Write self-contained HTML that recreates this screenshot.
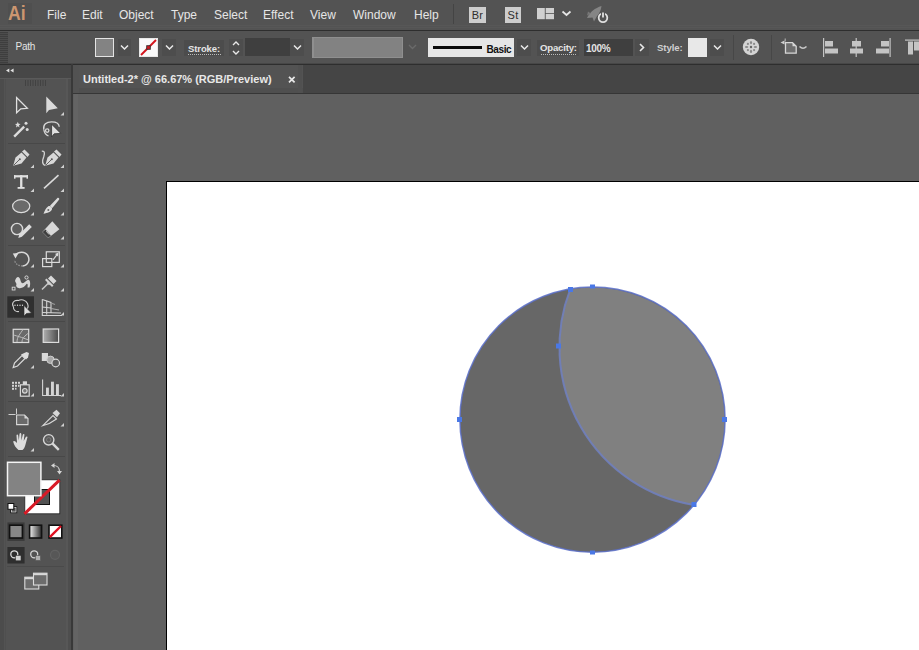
<!DOCTYPE html>
<html><head><meta charset="utf-8">
<style>
*{margin:0;padding:0;box-sizing:border-box}
html,body{width:919px;height:650px;overflow:hidden;background:#535353;font-family:"Liberation Sans",sans-serif}
.a{position:absolute}
#menubar{left:0;top:0;width:919px;height:30px;background:#535353}
#menuline{left:0;top:30px;width:919px;height:1px;background:#2e2e2e}
.mi{position:absolute;top:8px;font-size:12px;color:#e6e6e6;line-height:14px;white-space:nowrap}
#ctrl{left:0;top:31px;width:919px;height:33px;background:#535353}
#ctrlline{left:0;top:63px;width:919px;height:1px;background:#474747}
.lbl{position:absolute;font-size:10px;color:#e4e4e4;line-height:12px;white-space:nowrap}
#tools{left:0;top:64px;width:72px;height:586px;background:#535353}
#tabbar{left:73px;top:64px;width:846px;height:30px;background:#454545}
#canvas{left:73px;top:94px;width:846px;height:556px;background:#606060}
#artboard{left:166px;top:181px;width:760px;height:480px;background:#fff;border:1px solid #000}
</style></head>
<body>
<div class="a" id="menubar">
  <div class="a" style="left:8px;top:3px;width:24px;height:21px;background:#4f4f4f"></div>
  <div class="a" style="left:8px;top:1px;font-size:20.5px;color:#cc9670;font-weight:bold;line-height:24px;letter-spacing:0px;transform:scaleX(0.86);transform-origin:0 0">Ai</div>
  <div class="mi" style="left:47px">File</div>
  <div class="mi" style="left:82px">Edit</div>
  <div class="mi" style="left:119px">Object</div>
  <div class="mi" style="left:171px">Type</div>
  <div class="mi" style="left:214px">Select</div>
  <div class="mi" style="left:263px">Effect</div>
  <div class="mi" style="left:310px">View</div>
  <div class="mi" style="left:353px">Window</div>
  <div class="mi" style="left:414px">Help</div>
  <div class="a" style="left:453px;top:4px;width:1px;height:20px;background:#444"></div>
  <div class="a" style="left:469px;top:7px;width:17px;height:16px;background:#cdcdcd;color:#2e2e2e;font-size:11px;line-height:16px;text-align:center;letter-spacing:0.3px">Br</div>
  <div class="a" style="left:505px;top:7px;width:16px;height:16px;background:#cdcdcd;color:#2e2e2e;font-size:11px;line-height:16px;text-align:center;letter-spacing:0.3px">St</div>
  <svg class="a" style="left:536px;top:7px" width="20" height="13"><rect x="1" y="1" width="7.8" height="11.2" fill="#d0d0d0"/><rect x="9.7" y="1" width="8.3" height="5.2" fill="#d0d0d0"/><rect x="9.7" y="7" width="8.3" height="5.2" fill="#d0d0d0"/></svg>
  <svg class="a" style="left:561px;top:10px" width="11" height="7"><path d="M1.5 1.5 L5.5 5 L9.5 1.5" fill="none" stroke="#e6e6e6" stroke-width="1.7"/></svg>
  <svg class="a" style="left:583px;top:3px" width="28" height="22"><path d="M4 15 C7 9 12 5 18.5 3 C18 7 16.5 10.5 14 13 L11 18.5 L9.5 14.5 Z" fill="#858585"/><path d="M8 10.5 L4 12.5 L5 8.5 Z" fill="#777"/><circle cx="20" cy="14.8" r="4.3" fill="#535353" stroke="#e0e0e0" stroke-width="1.8"/><rect x="18" y="8.5" width="4" height="4.5" fill="#535353"/><path d="M20 9.5 L20 14.5" stroke="#e0e0e0" stroke-width="1.8"/></svg>
</div>
<div class="a" style="left:0;top:25px;width:919px;height:1px;background:#575757"></div>
<div class="a" style="left:0;top:27px;width:919px;height:1px;background:#575757"></div>
<div class="a" id="menuline"></div>
<div class="a" id="ctrl">
  <div class="a" style="left:0;top:1px;width:8px;height:31px;background:repeating-linear-gradient(#3e3e3e 0 1px,#4c4c4c 1px 2px)"></div>
  <div class="lbl" style="left:15.5px;top:10px;font-size:10px;letter-spacing:-0.25px">Path</div>
  <!-- fill swatch -->
  <div class="a" style="left:95px;top:7px;width:19px;height:19px;border:1.6px solid #e4e4e4;background:#838383"></div>
  <div class="a" style="left:118px;top:8px;width:13px;height:17px;background:#4d4d4d"></div>
  <svg class="a" style="left:120px;top:13px" width="9" height="6"><path d="M1 1.5 L4.5 5 L8 1.5" fill="none" stroke="#e8e8e8" stroke-width="1.5"/></svg>
  <!-- stroke swatch -->
  <div class="a" style="left:139px;top:7px;width:19px;height:19px;background:#fafafa;border:1px solid #e8e8e8"></div>
  <svg class="a" style="left:139px;top:7px" width="19" height="19"><path d="M2 17 L17 2" stroke="#d4161e" stroke-width="2"/><rect x="7.7" y="7.7" width="3.6" height="3.6" fill="#d4161e" stroke="#333" stroke-width="0.9"/></svg>
  <div class="a" style="left:162px;top:8px;width:14px;height:17px;background:#4d4d4d"></div>
  <svg class="a" style="left:165px;top:13px" width="9" height="6"><path d="M1 1.5 L4.5 5 L8 1.5" fill="none" stroke="#e8e8e8" stroke-width="1.5"/></svg>
  <!-- stroke label -->
  <div class="a" style="left:184px;top:9px;width:40px;height:16px;background:#4c4c4c"></div>
  <div class="lbl" style="left:188px;top:12px;font-size:9.5px;font-weight:bold;letter-spacing:-0.1px">Stroke:</div>
  <div class="a" style="left:188px;top:23px;width:33px;height:1px;background:repeating-linear-gradient(90deg,#bbb 0 1px,transparent 1px 2px)"></div>
  <div class="a" style="left:229px;top:8px;width:14px;height:17px;background:#4d4d4d"></div>
  <svg class="a" style="left:231px;top:9px" width="10" height="16"><path d="M2 5 L5 2 L8 5 M2 11 L5 14 L8 11" fill="none" stroke="#e8e8e8" stroke-width="1.4"/></svg>
  <div class="a" style="left:245px;top:7px;width:45px;height:18px;background:#3f3f3f"></div>
  <div class="a" style="left:290px;top:8px;width:14px;height:17px;background:#4d4d4d"></div>
  <svg class="a" style="left:293px;top:13px" width="9" height="6"><path d="M1 1.5 L4.5 5 L8 1.5" fill="none" stroke="#e8e8e8" stroke-width="1.5"/></svg>
  <!-- variable width field -->
  <div class="a" style="left:312px;top:6px;width:91px;height:21px;background:#828282;border:1px solid #8f8f8f;border-left-width:2px"></div>
  <svg class="a" style="left:408px;top:13px" width="9" height="6"><path d="M1 1 L4.5 4.5 L8 1" fill="none" stroke="#6a6a6a" stroke-width="1.4"/></svg>
  <!-- brush -->
  <div class="a" style="left:428px;top:7px;width:86px;height:19px;background:#e6e6e6"></div>
  <div class="a" style="left:433px;top:14.5px;width:49px;height:3.5px;background:#0a0a0a"></div>
  <div class="a" style="left:486.5px;top:12.5px;font-size:10px;line-height:12px;color:#111;font-weight:bold;letter-spacing:-0.4px">Basic</div>
  <div class="a" style="left:517px;top:8px;width:14px;height:17px;background:#4d4d4d"></div>
  <svg class="a" style="left:520px;top:13px" width="9" height="6"><path d="M1 1.5 L4.5 5 L8 1.5" fill="none" stroke="#e8e8e8" stroke-width="1.5"/></svg>
  <!-- opacity -->
  <div class="a" style="left:537px;top:9px;width:42px;height:16px;background:#4c4c4c"></div>
  <div class="lbl" style="left:540px;top:11px;font-size:9.6px;font-weight:bold;letter-spacing:-0.2px">Opacity:</div>
  <div class="a" style="left:541px;top:23px;width:35px;height:1px;background:repeating-linear-gradient(90deg,#bbb 0 1px,transparent 1px 2px)"></div>
  <div class="a" style="left:584px;top:8px;width:49px;height:17px;background:#3f3f3f"></div>
  <div class="lbl" style="left:586px;top:11.5px;font-size:10px;font-weight:bold;letter-spacing:-0.3px">100%</div>
  <div class="a" style="left:635px;top:8px;width:14px;height:17px;background:#4d4d4d"></div>
  <svg class="a" style="left:639px;top:12px" width="6" height="9"><path d="M1 1 L4.5 4.5 L1 8" fill="none" stroke="#e8e8e8" stroke-width="1.6"/></svg>
  <div class="lbl" style="left:657px;top:11px;font-size:9.6px;font-weight:bold;color:#d0d0d0;letter-spacing:-0.1px">Style:</div>
  <div class="a" style="left:688px;top:7px;width:19px;height:19px;background:#e8e8e8"></div>
  <div class="a" style="left:710px;top:8px;width:14px;height:17px;background:#4d4d4d"></div>
  <svg class="a" style="left:713px;top:13px" width="9" height="6"><path d="M1 1.5 L4.5 5 L8 1.5" fill="none" stroke="#e8e8e8" stroke-width="1.5"/></svg>
  <div class="a" style="left:733px;top:4px;width:1px;height:25px;background:#474747"></div>
  <!-- globe -->
  <svg class="a" style="left:742px;top:7px" width="18" height="18"><circle cx="9" cy="9" r="8.2" fill="#d4d4d4"/><g fill="#8a8a8a"><circle cx="9" cy="9" r="1.2" fill="#666"/><ellipse cx="9" cy="4.6" rx="1.1" ry="1.7"/><ellipse cx="9" cy="13.4" rx="1.1" ry="1.7"/><ellipse cx="4.6" cy="9" rx="1.7" ry="1.1"/><ellipse cx="13.4" cy="9" rx="1.7" ry="1.1"/><circle cx="5.9" cy="5.9" r="1.1"/><circle cx="12.1" cy="12.1" r="1.1"/><circle cx="12.1" cy="5.9" r="1.1"/><circle cx="5.9" cy="12.1" r="1.1"/></g></svg>
  <div class="a" style="left:771px;top:4px;width:1px;height:25px;background:#474747"></div>
  <!-- doc icon -->
  <svg class="a" style="left:778px;top:6px" width="30" height="20"><path d="M2.5 5.5 L6.5 3.5 L6.5 7.5 Z" fill="#cfcfcf"/><path d="M7.2 1.5 L7.2 4.5" stroke="#bbb" stroke-width="1"/><path d="M7.5 5.6 L14.5 5.6 L18.2 9.3 L18.2 16.2 L7.5 16.2 Z" fill="#6e6e6e" stroke="#d6d6d6" stroke-width="1.3"/><path d="M14.5 5.6 L18.2 9.3 L14.5 9.3 Z" fill="#d6d6d6"/><path d="M21.5 9.5 Q25 13 28.5 9.5" fill="none" stroke="#c8c8c8" stroke-width="1.5"/></svg>
  <!-- align icons -->
  <svg class="a" style="left:820px;top:6px" width="99" height="21">
    <g fill="#c4c4c4"><rect x="3" y="1" width="1.2" height="19"/><rect x="5" y="4" width="8" height="5.5"/><rect x="5" y="11.5" width="13" height="5"/>
    <rect x="35.6" y="1" width="1.2" height="19"/><rect x="32" y="4" width="9" height="5.5"/><rect x="30" y="11.5" width="13" height="5"/>
    <rect x="69.5" y="1" width="1.2" height="19"/><rect x="61" y="4" width="8" height="5.5"/><rect x="56" y="11.5" width="13" height="5"/>
    <rect x="85" y="2.5" width="14" height="1.2"/><rect x="88" y="4.5" width="5" height="13"/><rect x="94" y="4.5" width="5" height="9"/></g>
  </svg>
</div>
<div class="a" id="ctrlline"></div>
<div class="a" id="tools">
  <div class="a" style="left:0;top:0;width:72px;height:14px;background:#474747"></div>
  <div class="a" style="left:0;top:0;width:73px;height:1px;background:#2e2e2e"></div>
  <div class="a" style="left:0;top:14px;width:72px;height:1px;background:#5a5a5a"></div>
  <div class="a" style="left:0;top:15px;width:4px;height:571px;background:#4c4c4c"></div>
  <div class="a" style="left:5px;top:15px;width:1px;height:571px;background:#4f4f4f"></div>
  <div class="a" style="left:66px;top:15px;width:2px;height:571px;background:#575757"></div>
  <div class="a" style="left:68px;top:15px;width:3px;height:571px;background:#4e4e4e"></div>
  <div class="a" style="left:71px;top:0;width:3px;height:586px;background:#393939"></div>
  <div class="a" style="left:8px;top:79px;width:57px;height:1px;background:#484848"></div>
  <div class="a" style="left:8px;top:181px;width:57px;height:1px;background:#484848"></div>
  <div class="a" style="left:8px;top:257px;width:57px;height:1px;background:#484848"></div>
  <div class="a" style="left:8px;top:337px;width:57px;height:1px;background:#484848"></div>
  <div class="a" style="left:8px;top:392px;width:57px;height:1px;background:#484848"></div>
</div>
<svg class="a" style="left:0;top:0" width="73" height="650" id="toolsvg">
  <g fill="#e0e0e0"><path d="M6 70.6 L9.3 68.6 L9.3 72.6 Z M10.3 70.6 L13.6 68.6 L13.6 72.6 Z"/></g>
  <g fill="#424242"><rect x="25" y="80" width="1" height="6"/><rect x="27.5" y="80" width="1" height="6"/><rect x="30" y="80" width="1" height="6"/><rect x="32.5" y="80" width="1" height="6"/><rect x="35" y="80" width="1" height="6"/><rect x="37.5" y="80" width="1" height="6"/><rect x="40" y="80" width="1" height="6"/><rect x="42.5" y="80" width="1" height="6"/><rect x="45" y="80" width="1" height="6"/></g>
  <!-- flyout triangles -->
  <g fill="#d0d0d0">
    <path d="M64 112 L64 115.5 L60.5 115.5 Z"/>
    <path d="M34 164.5 L34 168 L30.5 168 Z"/><path d="M64 164.5 L64 168 L60.5 168 Z"/>
    <path d="M34 188.5 L34 192 L30.5 192 Z"/><path d="M64 188.5 L64 192 L60.5 192 Z"/>
    <path d="M34 212 L34 215.5 L30.5 215.5 Z"/><path d="M64 212 L64 215.5 L60.5 215.5 Z"/>
    <path d="M34 236 L34 239.5 L30.5 239.5 Z"/><path d="M64 236 L64 239.5 L60.5 239.5 Z"/>
    <path d="M34 264 L34 267.5 L30.5 267.5 Z"/><path d="M64 264 L64 267.5 L60.5 267.5 Z"/>
    <path d="M34 288 L34 291.5 L30.5 291.5 Z"/><path d="M64 288 L64 291.5 L60.5 291.5 Z"/>
    <path d="M34 312 L34 315.5 L30.5 315.5 Z"/><path d="M64 312 L64 315.5 L60.5 315.5 Z"/>
    <path d="M34 365 L34 368.5 L30.5 368.5 Z"/>
    <path d="M34 393 L34 396.5 L30.5 396.5 Z"/><path d="M64 393 L64 396.5 L60.5 396.5 Z"/>
    <path d="M64 423 L64 426.5 L60.5 426.5 Z"/>
    <path d="M34 448 L34 451.5 L30.5 451.5 Z"/>
  </g>
  <g fill="none" stroke="#e0e0e0" stroke-width="1.3" stroke-linejoin="miter">
    <!-- direct selection -->
    <path d="M16.6 97.5 L16.6 112.8 L20.8 108.8 L27.3 108.3 Z"/>
  </g>
  <g fill="#dadada">
    <!-- selection -->
    <path d="M46.3 96.5 L46.3 113.3 L49 110 L57.8 108.3 Z"/>
  </g>
  <!-- magic wand -->
  <g fill="#dcdcdc"><path d="M13.3 135.8 L23.3 125.8 L25 127.5 L15 137.5 Z"/><path d="M17.8 121.8 L18.6 123.8 L20.6 124 L19 125.3 L19.5 127.4 L17.8 126.2 L16 127.4 L16.5 125.3 L15 124 L17 123.8 Z"/><circle cx="26" cy="123.2" r="1.5"/><circle cx="27.2" cy="129.4" r="1.5"/></g>
  <!-- lasso -->
  <g fill="none" stroke="#d8d8d8" stroke-width="1.3"><path d="M43.8 129.5 C42.8 124.5 46.5 121.8 51.5 121.8 C56 121.8 59.2 123.5 59.2 126.8"/><path d="M43.8 129.5 C44.3 133 46 135 48.5 136"/><circle cx="47.2" cy="130.6" r="1.7"/></g>
  <path d="M51.6 124.2 L51.6 137 L54.2 133.8 L60.8 133.4 Z" fill="#e0e0e0" stroke="#333" stroke-width="0.8"/>
  <!-- pen -->
  <g fill="#d8d8d8"><path d="M13.2 165.8 L15.5 157.5 L21.5 152.5 L26.5 157.5 L21.5 163.5 Z"/><path d="M22 151.5 L24.5 149.5 L29.5 154.5 L27.5 157 Z"/></g>
  <path d="M13.8 165.2 L19.3 159.7" stroke="#555" stroke-width="0.9"/><circle cx="19.8" cy="159.2" r="1" fill="#555"/>
  <!-- curvature pen -->
  <g fill="#d8d8d8"><path d="M45.2 165.8 L47.5 157.5 L53.5 152.5 L58.5 157.5 L53.5 163.5 Z"/><path d="M54 151.5 L56.5 149.5 L61.5 154.5 L59.5 157 Z"/></g>
  <path d="M45.8 165.2 L51.3 159.7" stroke="#555" stroke-width="0.9"/><circle cx="51.8" cy="159.2" r="1" fill="#555"/>
  <path d="M41.8 151.3 C44.5 150.5 45 153 43.8 156.5 C42.2 160.5 41.8 164 45 165.5" fill="none" stroke="#d4d4d4" stroke-width="1.3"/>
  <!-- type -->
  <g fill="#e0e0e0"><rect x="14" y="175.2" width="14" height="2.2"/><rect x="14" y="175.2" width="1.5" height="3.5"/><rect x="26.5" y="175.2" width="1.5" height="3.5"/><rect x="20.1" y="175.2" width="2.3" height="13"/><rect x="17.6" y="187" width="7" height="1.8"/></g>
  <!-- line -->
  <path d="M44 188.3 L58.5 175.2" stroke="#dadada" stroke-width="1.6"/>
  <!-- ellipse -->
  <ellipse cx="21.2" cy="206.2" rx="8.6" ry="6.5" fill="#6a6a6a" stroke="#dcdcdc" stroke-width="1.2"/>
  <!-- paintbrush -->
  <path d="M50 205.8 L57.2 198.2 C58.4 197.2 60 198.6 59 199.8 L52.3 208 Z" fill="#dcdcdc"/>
  <path d="M43.5 213.8 C44.8 211 45.8 207.8 48.3 206.3 C50.2 205.3 52.6 207.4 52 209.3 C51 212 47.5 213 43.5 213.8 Z" fill="#dcdcdc"/>
  <circle cx="48.3" cy="210" r="1" fill="#666"/>
  <!-- shaper -->
  <circle cx="17" cy="229" r="5.6" fill="#5e5e5e" stroke="#d8d8d8" stroke-width="1.4"/>
  <path d="M18.3 238 L19.3 234.2 L29.2 224.3 L31.8 226.9 L21.9 236.8 Z" fill="#dcdcdc"/>
  <!-- eraser -->
  <path d="M52.3 221.2 L59.4 229.2 L48.3 238 L42.4 232 Z" fill="#d8d8d8"/>
  <path d="M45.5 229.5 L50.8 235.6 L48.3 237.7 L42.6 232 Z" fill="#3f3f3f"/>
  <path d="M46.2 231.2 L49.2 234.6" stroke="#d8d8d8" stroke-width="0.9"/>
  <!-- rotate -->
  <path d="M15.5 255 C18.5 251.5 25 251 27.8 255.5 C30.5 260 28 265.5 22.5 266" fill="none" stroke="#d8d8d8" stroke-width="1.5"/>
  <path d="M22.5 266 C18 266 15 263.5 14.5 260" fill="none" stroke="#9a9a9a" stroke-width="1.2" stroke-dasharray="1.5 1.2"/>
  <path d="M12.8 253.5 L18.5 253 L15.5 258.5 Z" fill="#dcdcdc"/>
  <!-- scale -->
  <g fill="none" stroke="#dadada" stroke-width="1.2"><rect x="46.3" y="251.8" width="13" height="10.6"/><rect x="42.6" y="258.6" width="9.2" height="8"/><path d="M53 259.8 L57.5 254"/></g>
  <path d="M58.5 252.5 L58 256.5 L55 254 Z" fill="#dadada"/>
  <!-- width tool -->
  <path d="M15 281 C16 277.5 18 276 19.5 278 C21 280 20.5 284 23.5 283 C26 282 27 279 29 280 C30.5 281 30.5 285 29.5 287.5 L27.5 287.5 C28 285 27.5 283 26.5 284 C25 286.5 21.5 289 18.5 288 C16.5 287.5 15.5 286 16.5 284 Z" fill="#d8d8d8"/>
  <circle cx="26.5" cy="277.5" r="1.6" fill="none" stroke="#d8d8d8" stroke-width="1"/>
  <rect x="12.2" y="287.2" width="2.8" height="2.8" fill="none" stroke="#d8d8d8" stroke-width="0.9"/>
  <!-- puppet warp pin -->
  <path d="M51 275.5 L56.5 281 L53.5 284 L48 278.5 Z" fill="#d8d8d8"/>
  <path d="M46.5 278.5 L53.5 285.5 L52 287 L45 280 Z" fill="#d0d0d0"/>
  <path d="M48.2 281.5 L50.5 283.8 L49 285.2 L46.8 283 Z" fill="#d0d0d0"/>
  <path d="M42 289.5 L47.8 283.7" stroke="#c8c8c8" stroke-width="1.5"/>
  <!-- shape builder selected -->
  <rect x="7.3" y="296.3" width="26.7" height="21.4" fill="#2f2f2f"/>
  <g fill="none" stroke="#d0d0d0" stroke-width="1.1"><path d="M13.5 307 C11 303 14 299.8 18.5 300.5 C20.5 299 26 299.5 27.5 303.5 C28.5 306 28 309 25 310.5"/><path d="M13.5 307 C13 310 16 312 19 311.5"/></g>
  <g fill="#e0e0e0"><circle cx="15" cy="305.3" r="0.7"/><circle cx="17.5" cy="305.3" r="0.7"/><circle cx="20" cy="305.3" r="0.7"/><circle cx="22.5" cy="305.3" r="0.7"/></g>
  <path d="M24 305.5 L24 316 L26.5 313.5 L31.5 313 Z" fill="#dcdcdc" stroke="#2a2a2a" stroke-width="0.6"/>
  <!-- perspective grid -->
  <g fill="none" stroke="#d4d4d4" stroke-width="1.1"><path d="M42.3 299.3 L42.3 315.5 L62 315.5"/><path d="M42.3 299.6 L51 302.5 L51 313"/><path d="M46.7 300.8 L46.7 314.5"/><path d="M42.3 307 L51 308"/><path d="M51 303 L55 304.5" stroke="#9a9a9a"/><path d="M51 308.5 L59 310" stroke="#aaa"/><path d="M42.3 312.5 L61 313"/></g>
  <!-- mesh -->
  <rect x="13.2" y="329.3" width="15.5" height="13.2" fill="#6a6a6a" stroke="#dcdcdc" stroke-width="1.2"/>
  <g fill="none" stroke="#bdbdbd" stroke-width="1"><path d="M17 342 C17 337 20 334 23 329.5"/><path d="M13.5 335 C17 336 21 337 28.5 340"/><path d="M22 342 C22 338 25 336 28.5 333"/></g>
  <!-- gradient -->
  <defs><linearGradient id="g1" x1="0" x2="1"><stop offset="0" stop-color="#b0b0b0"/><stop offset="1" stop-color="#4a4a4a"/></linearGradient>
  <linearGradient id="g2" x1="0" x2="1"><stop offset="0" stop-color="#f0f0f0"/><stop offset="1" stop-color="#2a2a2a"/></linearGradient></defs>
  <rect x="43.2" y="329" width="15.4" height="13.4" fill="url(#g1)" stroke="#dcdcdc" stroke-width="1.2"/>
  <!-- eyedropper -->
  <path d="M13.2 367.5 L14.5 363 L22 355.5 L25 358.5 L17.5 366 Z" fill="none" stroke="#d8d8d8" stroke-width="1.2"/>
  <path d="M21 354.5 L26 359.5 L28 357.5 L29 353 L26.5 352 Z" fill="#dcdcdc"/>
  <!-- blend -->
  <rect x="41.8" y="353" width="6.2" height="8" fill="#d8d8d8"/>
  <circle cx="50.5" cy="359.8" r="3.7" fill="#a8a8a8" stroke="#d0d0d0" stroke-width="1"/>
  <circle cx="55.7" cy="363" r="3.8" fill="#5c5c5c" stroke="#d8d8d8" stroke-width="1.2"/>
  <!-- symbol sprayer -->
  <g fill="#d4d4d4"><rect x="12" y="381.8" width="2" height="2"/><rect x="15" y="381.8" width="2" height="2"/><rect x="18" y="381.8" width="2" height="2"/><rect x="12" y="384.8" width="2" height="2"/><rect x="15" y="384.8" width="2" height="2"/><rect x="18" y="384.8" width="1.5" height="2"/><rect x="12" y="387.8" width="2" height="2"/><rect x="15" y="387.8" width="1.5" height="1.8"/></g>
  <rect x="20.4" y="384.8" width="8.8" height="11.4" fill="none" stroke="#d8d8d8" stroke-width="1.2"/>
  <rect x="22.8" y="381.3" width="4.2" height="3.5" fill="#d8d8d8"/>
  <circle cx="24.8" cy="390.8" r="2.3" fill="#7a7a7a" stroke="#d8d8d8" stroke-width="1.2"/>
  <!-- column graph -->
  <path d="M42.6 379.5 L42.6 395.5 L61 395.5" fill="none" stroke="#d4d4d4" stroke-width="1.1"/>
  <g fill="#d4d4d4"><rect x="46" y="387.6" width="2.9" height="7.5"/><rect x="51" y="381.7" width="2.9" height="13.4"/><rect x="56" y="384.2" width="2.9" height="10.9"/></g>
  <!-- artboard -->
  <path d="M8.5 414.5 L15.5 414.5 M16.5 408.5 L16.5 414" stroke="#cfcfcf" stroke-width="1"/>
  <path d="M16.6 415 L24.5 415 L28 418.5 L28 424.6 L16.6 424.6 Z" fill="#6a6a6a" stroke="#d8d8d8" stroke-width="1.1"/>
  <path d="M24.5 415 L28 418.5 L24.5 418.5 Z" fill="#d8d8d8"/>
  <!-- slice -->
  <path d="M42.5 425.8 L53 415.5 L56.5 419 C52 422.5 47.5 424.5 42.5 425.8 Z" fill="none" stroke="#d6d6d6" stroke-width="1.1"/>
  <path d="M52.5 413 L56.5 409.8 L60 413.3 L57 417.3 Z" fill="#d6d6d6"/>
  <!-- hand -->
  <path d="M18.5 450 C16 448 14 445 13.3 442 C13 440.8 14.5 440.5 15.5 441.5 L17 443 L16.5 435.5 C16.5 434.3 18 434.3 18.2 435.5 L18.8 440.5 L19.5 434 C19.7 432.8 21.2 432.8 21.3 434 L21.3 440.5 L22.8 434.8 C23.1 433.6 24.6 433.8 24.4 435 L23.7 441 L25.8 437 C26.3 436 27.8 436.4 27.4 437.6 L25.5 444.5 C24.8 447.5 23.5 449.5 22.5 450 Z" fill="#dcdcdc"/>
  <!-- zoom -->
  <circle cx="48.7" cy="439.8" r="5.2" fill="#5a5a5a" stroke="#d8d8d8" stroke-width="1.4"/>
  <circle cx="48.7" cy="439.8" r="2.2" fill="none" stroke="#7c7c7c" stroke-width="1"/>
  <path d="M52.6 443.7 L58.8 449.9" stroke="#d8d8d8" stroke-width="2.4"/>
  <!-- fill & stroke -->
  <rect x="24.8" y="479.8" width="35" height="34" fill="#fff" stroke="#222" stroke-width="0.8"/>
  <rect x="34.5" y="489.5" width="15" height="15" fill="#535353" stroke="#111" stroke-width="1"/>
  <path d="M24.5 513.8 L59.5 480.2" stroke="#d81a26" stroke-width="3"/>
  <rect x="7.5" y="462.3" width="33.4" height="33.4" fill="#838383" stroke="#f4f4f4" stroke-width="1.5"/>
  <!-- swap -->
  <path d="M53.5 465.5 C57 465.5 59.5 468 59.5 471.5" fill="none" stroke="#cfcfcf" stroke-width="1.2"/>
  <path d="M51 465.5 L54.5 463 L54.5 468 Z M59.5 474.5 L57 471 L62 471 Z" fill="#d4d4d4"/>
  <!-- default -->
  <rect x="11" y="507" width="5.5" height="5.5" fill="none" stroke="#111" stroke-width="1.4"/>
  <rect x="11.5" y="507.5" width="4.5" height="4.5" fill="none" stroke="#ddd" stroke-width="0.8"/>
  <rect x="8" y="503.5" width="5.8" height="5.8" fill="#fff" stroke="#111" stroke-width="1"/>
  <!-- mode row -->
  <rect x="7.4" y="522.4" width="17.2" height="18.5" fill="#3a3a3a"/>
  <rect x="9.6" y="525.2" width="12.8" height="12.8" fill="#888" stroke="#111" stroke-width="1.6"/>
  <rect x="29.6" y="525.2" width="12" height="12.8" fill="url(#g2)" stroke="#111" stroke-width="1.6"/>
  <rect x="49" y="525.2" width="12.8" height="12.8" fill="#fff" stroke="#111" stroke-width="1.6"/>
  <path d="M49.8 537.2 L61 526" stroke="#e01020" stroke-width="2.4"/>
  <!-- draw modes -->
  <rect x="7.4" y="547" width="17.2" height="16.5" fill="#2f2f2f"/>
  <circle cx="14.3" cy="554.3" r="3.5" fill="none" stroke="#dcdcdc" stroke-width="1.3"/>
  <rect x="15.5" y="555.3" width="5.5" height="5.5" fill="#d4d4d4" stroke="#2f2f2f" stroke-width="0.6"/>
  <circle cx="34.2" cy="554.3" r="3.5" fill="none" stroke="#d4d4d4" stroke-width="1.3"/>
  <rect x="35.5" y="555.5" width="5" height="5" fill="#b0b0b0" stroke="#535353" stroke-width="0.6"/>
  <circle cx="55" cy="554.8" r="4.5" fill="#575757" stroke="#626262" stroke-width="1.2"/>
  <path d="M7 566.5 L64 566.5" stroke="#4a4a4a" stroke-width="1"/>
  <!-- screen mode -->
  <rect x="24.8" y="577.2" width="14" height="11.8" fill="#6c6c6c" stroke="#dcdcdc" stroke-width="1.1"/>
  <rect x="24.8" y="577.2" width="14" height="2" fill="#d8d8d8"/>
  <rect x="33.5" y="573.2" width="13.5" height="11.8" fill="#6c6c6c" stroke="#dcdcdc" stroke-width="1.1"/>
  <rect x="33.5" y="573.2" width="13.5" height="2" fill="#d8d8d8"/>
</svg>
<div class="a" id="tabbar">
  <div class="a" style="left:0;top:0;width:846px;height:1px;background:#2e2e2e"></div>
  <div class="a" style="left:0;top:1px;width:6px;height:28px;background:#525252"></div>
  <div class="a" style="left:6px;top:1px;width:224px;height:28px;background:#535353"></div>
  <div class="a" style="left:6px;top:24px;width:224px;height:5px;background:#4f4f4f"></div>
  <div class="a" style="left:225px;top:1px;width:4px;height:28px;background:#505050"></div>
  <div class="a" style="left:0;top:29px;width:846px;height:1px;background:#363636"></div>
  <div class="a" style="left:10px;top:9px;font-size:11px;font-weight:bold;color:#e8e8e8;white-space:nowrap">Untitled-2* @ 66.67% (RGB/Preview)</div>
  <svg class="a" style="left:214px;top:11px" width="10" height="10"><path d="M2 1.8 L7.6 7.4 M7.6 1.8 L2 7.4" stroke="#e8e8e8" stroke-width="1.7"/></svg>
</div>
<div class="a" id="canvas">
  <div class="a" style="left:1px;top:0;width:4px;height:556px;background:#646464"></div>
</div>
<div class="a" id="artboard"></div>
<svg class="a" style="left:0;top:0" width="919" height="650">
  <circle cx="592.5" cy="419.6" r="132.6" fill="#676767"/>
  <path d="M570.3 289.2 A132.6 132.6 0 0 1 693.8 505 A159.9 159.9 0 0 1 570.3 289.2 Z" fill="#808080"/>
  <circle cx="592.5" cy="419.6" r="132.6" fill="none" stroke="#5a6ec8" stroke-width="1.5" opacity="0.85"/>
  <path d="M570.3 289.2 A159.9 159.9 0 0 0 693.8 505" fill="none" stroke="#7080bc" stroke-width="2" opacity="0.9"/>
  <g fill="#4a78e6">
    <rect x="590" y="284.5" width="5" height="4"/>
    <rect x="568" y="287" width="5" height="5"/>
    <rect x="556" y="343.5" width="5" height="5"/>
    <rect x="457" y="417" width="5" height="5"/>
    <rect x="722" y="417" width="5" height="5"/>
    <rect x="590" y="550.5" width="5" height="4"/>
    <rect x="691.5" y="502" width="5" height="5"/>
  </g>
</svg>
</body></html>
